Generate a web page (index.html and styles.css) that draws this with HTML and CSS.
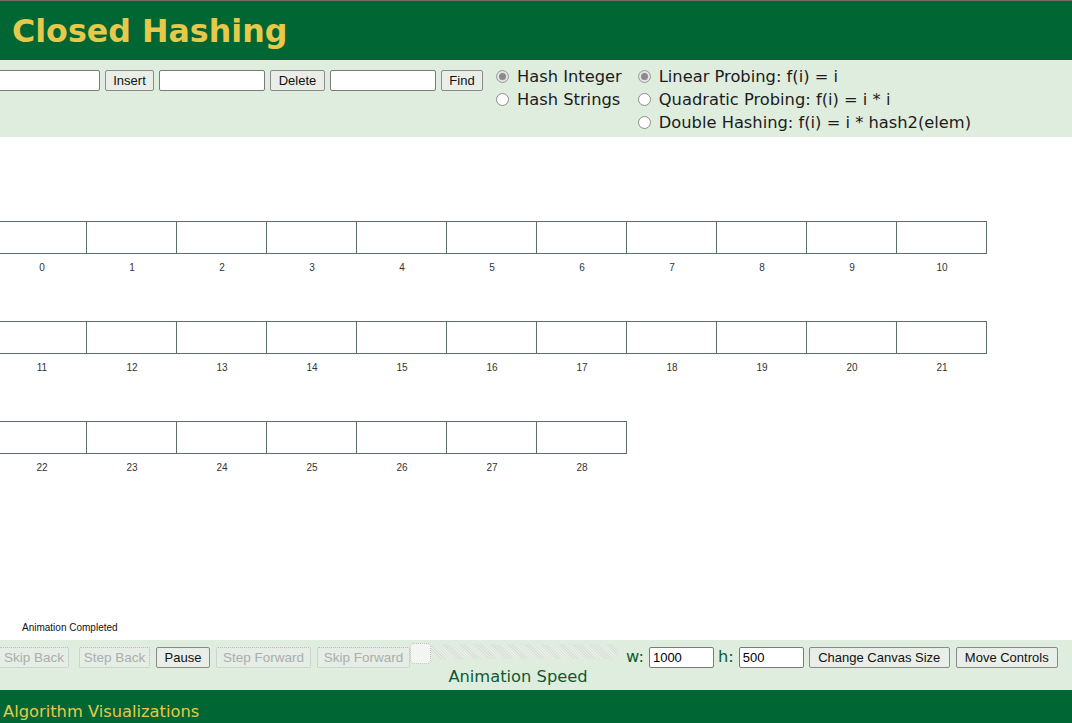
FILE: index.html
```html
<!DOCTYPE html>
<html>
<head>
<meta charset="utf-8">
<title>Closed Hashing</title>
<link rel="stylesheet" href="styles.css">
</head>
<body>
<div class="header"><h1 class="title">Closed Hashing</h1></div>
<div class="controls">
  <div class="ops">
    <input class="field field-first" type="text">
    <button class="btn btn-insert">Insert</button>
    <input class="field" type="text">
    <button class="btn btn-delete">Delete</button>
    <input class="field" type="text">
    <button class="btn btn-find">Find</button>
  </div>
  <div class="radios radios-hash">
    <div class="opt"><span class="dot on"></span>Hash Integer</div>
    <div class="opt"><span class="dot"></span>Hash Strings</div>
  </div>
  <div class="radios">
    <div class="opt"><span class="dot on"></span>Linear Probing: f(i) = i</div>
    <div class="opt"><span class="dot"></span>Quadratic Probing: f(i) = i * i</div>
    <div class="opt"><span class="dot"></span>Double Hashing: f(i) = i * hash2(elem)</div>
  </div>
</div>
<div class="canvas">
  <div class="table">
    <div class="trow">
      <div class="cells">
        <div class="cell"></div><div class="cell"></div><div class="cell"></div><div class="cell"></div><div class="cell"></div><div class="cell"></div><div class="cell"></div><div class="cell"></div><div class="cell"></div><div class="cell"></div><div class="cell"></div>
      </div>
      <div class="labels">
        <span>0</span><span>1</span><span>2</span><span>3</span><span>4</span><span>5</span><span>6</span><span>7</span><span>8</span><span>9</span><span>10</span>
      </div>
    </div>
    <div class="trow">
      <div class="cells">
        <div class="cell"></div><div class="cell"></div><div class="cell"></div><div class="cell"></div><div class="cell"></div><div class="cell"></div><div class="cell"></div><div class="cell"></div><div class="cell"></div><div class="cell"></div><div class="cell"></div>
      </div>
      <div class="labels">
        <span>11</span><span>12</span><span>13</span><span>14</span><span>15</span><span>16</span><span>17</span><span>18</span><span>19</span><span>20</span><span>21</span>
      </div>
    </div>
    <div class="trow">
      <div class="cells">
        <div class="cell"></div><div class="cell"></div><div class="cell"></div><div class="cell"></div><div class="cell"></div><div class="cell"></div><div class="cell"></div>
      </div>
      <div class="labels">
        <span>22</span><span>23</span><span>24</span><span>25</span><span>26</span><span>27</span><span>28</span>
      </div>
    </div>
  </div>
  <div class="status">Animation Completed</div>
</div>
<div class="anim">
  <button class="btn btn-off btn-first">Skip Back</button>
  <button class="btn btn-off btn-stepb">Step Back</button>
  <button class="btn btn-pause">Pause</button>
  <button class="btn btn-off btn-stepf">Step Forward</button>
  <button class="btn btn-off btn-skipf">Skip Forward</button>
  <div class="speed">
    <div class="slider"><span class="thumb"></span><span class="track"></span></div>
    <div class="speed-label">Animation Speed</div>
  </div>
  <span class="dim dim-w">w:</span>
  <input class="field field-size" type="text" value="1000">
  <span class="dim dim-h">h:</span>
  <input class="field field-size" type="text" value="500">
  <button class="btn btn-canvas">Change Canvas Size</button>
  <button class="btn btn-move">Move Controls</button>
</div>
<div class="footer">Algorithm Visualizations</div>
</body>
</html>
```
FILE: styles.css
```css
html, body {
  margin: 0;
  padding: 0;
  background: #ffffff;
  overflow: hidden;
}
body {
  width: 1072px;
  height: 723px;
  font-family: "DejaVu Sans", Verdana, sans-serif;
}
.header {
  border-top: 1px solid #6e6e6e;
  height: 59px;
  background: #006633;
}
.title {
  margin: 0;
  padding-left: 12px;
  font-family: "DejaVu Sans", Verdana, sans-serif;
  font-weight: bold;
  font-size: 31.7px;
  line-height: 61px;
  color: #e6c94a;
}
.controls {
  height: 77px;
  background: #dfeddf;
  display: flex;
  align-items: flex-start;
  box-sizing: border-box;
}
.ops {
  display: flex;
  align-items: center;
  margin-top: 10px;
  margin-left: -6px;
}
.field {
  box-sizing: border-box;
  width: 106px;
  height: 21px;
  margin: 0;
  padding: 0 3px;
  border: 1px solid #7a7a7a;
  border-radius: 2px;
  background: #ffffff;
  font-family: "Liberation Sans", Arial, sans-serif;
  font-size: 13px;
  color: #000;
  outline: none;
}
.btn {
  box-sizing: border-box;
  height: 21px;
  margin: 0 0 0 5px;
  padding: 0;
  border: 1px solid #8a8a8a;
  border-radius: 2px;
  background: #e9eee8;
  font-family: "Liberation Sans", Arial, sans-serif;
  font-size: 13px;
  color: #111;
  line-height: 19px;
  white-space: nowrap;
  text-align: center;
}
.ops .btn { margin-right: 5px; margin-left: 5px; }
.btn-insert { width: 49px; }
.btn-delete { width: 55px; }
.btn-find { width: 42px; }
.radios {
  display: flex;
  flex-direction: column;
  padding-top: 5px;
}
.radios-hash { margin-left: 8px; margin-right: 16px; }
.opt {
  display: flex;
  align-items: center;
  height: 23px;
  font-size: 16.3px;
  color: #1c1c1c;
  white-space: nowrap;
}
.dot {
  box-sizing: border-box;
  width: 13px;
  height: 13px;
  border: 1px solid #8c8c8c;
  border-radius: 50%;
  background: #ffffff;
  margin-right: 8px;
  display: inline-flex;
  align-items: center;
  justify-content: center;
}
.dot.on { background: #e2e2e2; border-color: #9a9a9a; }
.dot.on::after {
  content: "";
  width: 7px;
  height: 7px;
  border-radius: 50%;
  background: #8a8a8a;
}
.canvas {
  height: 503px;
  background: #ffffff;
  display: flex;
  flex-direction: column;
}
.table {
  padding-top: 84px;
  margin-left: -4px;
}
.trow {
  height: 100px;
}
.cells {
  display: flex;
}
.cell {
  box-sizing: border-box;
  width: 90px;
  height: 33px;
  border-top: 1px solid #5e6f67;
  border-bottom: 1px solid #5e6f67;
  border-right: 1px solid #5e6f67;
}
.cell:first-child {
  width: 91px;
  border-left: 1px solid #5e6f67;
}
.labels {
  display: flex;
  margin-top: 8px;
  padding-left: 1px;
}
.labels span {
  width: 90px;
  text-align: center;
  font-family: "Liberation Sans", Arial, sans-serif;
  font-size: 10px;
  line-height: 12px;
  color: #333;
}
.status {
  margin-top: auto;
  margin-bottom: 6px;
  padding-left: 22px;
  font-family: "Liberation Sans", Arial, sans-serif;
  font-size: 10px;
  line-height: 12px;
  color: #111;
}
.anim {
  height: 50px;
  background: #dfeddf;
  display: flex;
  align-items: flex-start;
}
.anim .btn { margin-top: 7px; margin-left: 6px; }
.anim .btn-first { margin-left: -1px; width: 70px; }
.anim .btn-stepb { margin-left: 10px; width: 71px; }
.anim .btn-pause { width: 54px; }
.anim .btn-stepf { width: 95px; }
.anim .btn-skipf { margin-left: 6px; width: 93px; }
.btn-off {
  color: #a8b0a8;
  border: 1px dotted #b4bcb4;
  background: #e6ece6;
  font-size: 13.5px;
}
.speed {
  display: flex;
  flex-direction: column;
  width: 216px;
}
.slider {
  display: flex;
  align-items: flex-start;
  height: 27px;
  padding-top: 3px;
  box-sizing: border-box;
}
.thumb {
  box-sizing: border-box;
  width: 21px;
  height: 21px;
  border: 1px dotted #b8c0b8;
  border-radius: 4px;
  background: #f2f5f2;
}
.track {
  width: 187px;
  height: 15px;
  margin-top: 1px;
  background: repeating-linear-gradient(45deg, #e8eee8 0 1px, #d8e2d8 1px 2px);
}
.speed-label {
  text-align: center;
  font-size: 16.3px;
  line-height: 20px;
  color: #0f5a30;
}
.dim {
  margin-top: 7px;
  font-size: 16.3px;
  line-height: 20px;
  color: #0f5a30;
}
.dim-w { margin-left: 0; margin-right: 5px; }
.dim-h { margin-left: 4px; margin-right: 5px; }
.field-size {
  width: 65px;
  margin-top: 7px;
  height: 21px;
}
.anim .btn-canvas { margin-left: 5px; width: 141px; }
.anim .btn-move { margin-left: 6px; width: 102px; }
.footer {
  height: 33px;
  background: #006633;
  color: #e6c94a;
  font-size: 16.3px;
  line-height: 43px;
  padding-left: 3px;
  box-sizing: border-box;
}
```
